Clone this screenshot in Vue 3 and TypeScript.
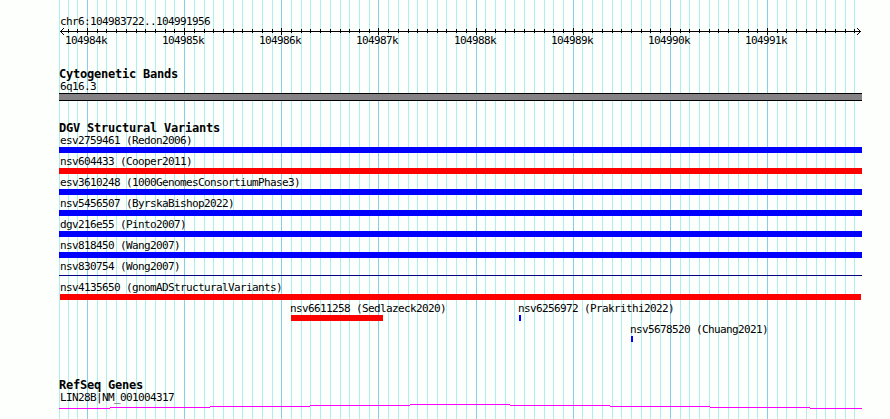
<template>
  <main class="browser">
    <svg class="browser__grid" width="890" height="419" shape-rendering="crispEdges">
      <rect
        v-for="line in gridLines"
        :key="line.x"
        :class="line.major ? 'grid-line--major' : 'grid-line'"
        :x="line.x"
        y="0"
        width="1"
        height="419"
      />
    </svg>

    <div class="browser__tracks">
      <section class="ruler">
        <div class="label">chr6:104983722..104991956</div>
        <svg class="ruler__axis" width="803" height="9" shape-rendering="crispEdges">
          <rect x="1" y="4" width="801" height="1" />
          <rect
            v-for="tick in ticks"
            :key="tick.x"
            :x="tick.x - LEFT"
            :y="tick.major ? 1 : 2"
            width="1"
            :height="tick.major ? 7 : 4"
          />
          <path d="M4.5 1.5L1.5 4.5L4.5 7.5M798.5 1.5L801.5 4.5L798.5 7.5" />
        </svg>
        <svg class="ruler__labels" width="803" height="14">
          <text
            v-for="tick in majorTicks"
            :key="tick.x"
            class="ruler__text"
            :x="tick.x - LEFT - 22"
            y="8"
          >{{ tick.name }}</text>
        </svg>
      </section>

      <section class="track track--bands">
        <h2 class="track__title">Cytogenetic Bands</h2>
        <div class="label">6q16.3</div>
        <div class="band"></div>
      </section>

      <section class="track track--variants">
        <h2 class="track__title">DGV Structural Variants</h2>
        <div v-for="(row, i) in rows" :key="i" class="row">
          <div
            v-for="variant in row"
            :key="variant.name"
            class="variant"
            :style="{ marginLeft: `${variant.offset}px` }"
          >
            <div
              class="label"
              :class="{
                'label--inset': variant.offset > 0,
                'label--outset': variant.offset > 1,
              }"
            >{{ variant.name }}</div>
            <div
              class="variant__bar"
              :class="`variant__bar--${variant.kind}`"
              :style="{ width: `${variant.width}px` }"
            ></div>
          </div>
        </div>
      </section>

      <section class="track track--genes">
        <h2 class="track__title">RefSeq Genes</h2>
        <div class="label">LIN28B|NM_001004317</div>
        <svg class="gene" width="803" height="6" shape-rendering="crispEdges">
          <rect
            v-for="part in intron"
            :key="part.x"
            :x="part.x"
            :y="part.y"
            :width="part.width"
            height="1"
          />
        </svg>
      </section>
    </div>
  </main>
</template>

<script setup lang="ts">
type Kind = 'gain' | 'loss' | 'line';

interface Variant {
  name: string;
  kind: Kind;
  offset: number;
  width: number;
}

interface Tick {
  x: number;
  major: boolean;
  name: string;
}

const LEFT = 59;
const FIRST_MAJOR = 86.99;
const STEP = 9.714; // pixels per 100 bases

const gridLines: Tick[] = Array.from({ length: 83 }, (_, i) => {
  const k = i - 3;
  return {
    x: Math.max(LEFT, Math.round(FIRST_MAJOR + k * STEP)),
    major: k >= 0 && k % 10 === 0,
    name: `${104984 + k / 10}k`,
  };
}).filter((line) => line.x < 860);
const ticks = gridLines.slice(1);
const majorTicks = ticks.filter((tick) => tick.major);

const full = (name: string, kind: Kind): Variant[] => [
  { name, kind, offset: 0, width: 803 },
];

const rows: Variant[][] = [
  full('esv2759461 (Redon2006)', 'loss'),
  full('nsv604433 (Cooper2011)', 'gain'),
  full('esv3610248 (1000GenomesConsortiumPhase3)', 'loss'),
  full('nsv5456507 (ByrskaBishop2022)', 'loss'),
  full('dgv216e55 (Pinto2007)', 'loss'),
  full('nsv818450 (Wang2007)', 'loss'),
  full('nsv830754 (Wong2007)', 'line'),
  [{ name: 'nsv4135650 (gnomADStructuralVariants)', kind: 'gain', offset: 1, width: 801 }],
  [
    { name: 'nsv6611258 (Sedlazeck2020)', kind: 'gain', offset: 232, width: 92 },
    { name: 'nsv6256972 (Prakrithi2022)', kind: 'loss', offset: 460, width: 2 },
  ],
  [{ name: 'nsv5678520 (Chuang2021)', kind: 'loss', offset: 572, width: 2 }],
];

const intron = [
  { x: 0, y: 4, width: 51 },
  { x: 51, y: 3, width: 100 },
  { x: 151, y: 2, width: 100 },
  { x: 251, y: 1, width: 100 },
  { x: 351, y: 0, width: 100 },
  { x: 451, y: 1, width: 100 },
  { x: 551, y: 2, width: 100 },
  { x: 651, y: 3, width: 100 },
  { x: 751, y: 4, width: 52 },
];
</script>

<style>
body {
  background: #fdfffc;
}
</style>

<style scoped>
.browser {
  display: grid;
  width: 890px;
  height: 419px;
  overflow: hidden;
  background: #fdfffc;
  color: #000;
}

.browser__grid,
.browser__tracks {
  grid-area: 1 / 1;
}

.grid-line {
  fill: #afeeee;
}

.grid-line--major {
  fill: #87ceeb;
}

.browser__tracks {
  width: 803px;
  margin-left: 59px;
  padding-top: 15px;
}

svg {
  display: block;
}

.label,
.ruler__text {
  font-family: 'DejaVu Sans Mono', monospace;
  font-size: 11px;
  letter-spacing: -0.622px;
}

.label {
  height: 12px;
  padding-left: 1px;
  line-height: 14px;
  white-space: pre;
}

.label--inset {
  padding-left: 0;
}

.label--outset {
  margin-left: -1px;
}

.ruler {
  height: 53px;
}

.ruler__axis path {
  fill: none;
  stroke: #000;
  stroke-linecap: square;
}

.ruler__labels {
  overflow: visible;
}

.track__title {
  height: 12px;
  margin: 0;
  font: bold 12px/12px 'DejaVu Sans Mono', monospace;
  letter-spacing: -0.225px;
}

.track--bands {
  height: 54px;
}

.band {
  height: 8px;
  margin-top: 1px;
  box-sizing: border-box;
  border: solid #000;
  border-width: 1px 0;
  background: #848284;
}

.track--variants {
  height: 257px;
}

.row {
  display: grid;
  height: 21px;
}

.variant {
  grid-area: 1 / 1;
}

.variant__bar {
  height: 6px;
  margin-top: 1px;
}

.variant__bar--gain {
  background: #f00;
}

.variant__bar--loss {
  background: #00f;
}

.variant__bar--line {
  height: 1px;
  margin-top: 3px;
  background: #000080;
}

.gene {
  margin-top: 1px;
  fill: #f0f;
}
</style>
